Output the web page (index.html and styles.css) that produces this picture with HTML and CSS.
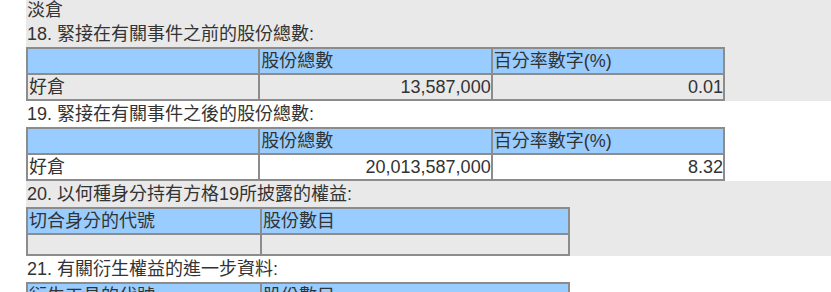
FILE: index.html
```html
<!DOCTYPE html>
<html lang="zh-Hant">
<head>
<meta charset="utf-8">
<title>權益披露</title>
<link rel="stylesheet" href="styles.css">
</head>
<body>
<div class="page">
  <div class="section alt">
    <div class="line first">淡倉</div>
    <div class="line">18. 緊接在有關事件之前的股份總數:</div>
    <table class="grid wide">
      <tr class="head"><td></td><td>股份總數</td><td>百分率數字(%)</td></tr>
      <tr><td>好倉</td><td class="num">13,587,000</td><td class="num">0.01</td></tr>
    </table>
  </div>
  <div class="section">
    <div class="line">19. 緊接在有關事件之後的股份總數:</div>
    <table class="grid wide">
      <tr class="head"><td></td><td>股份總數</td><td>百分率數字(%)</td></tr>
      <tr><td>好倉</td><td class="num">20,013,587,000</td><td class="num">8.32</td></tr>
    </table>
  </div>
  <div class="section alt">
    <div class="line">20. 以何種身分持有方格19所披露的權益:</div>
    <table class="grid narrow">
      <tr class="head"><td>切合身分的代號</td><td>股份數目</td></tr>
      <tr><td><div class="empty"></div></td><td><div class="empty"></div></td></tr>
    </table>
  </div>
  <div class="section">
    <div class="line">21. 有關衍生權益的進一步資料:</div>
    <table class="grid narrow">
      <tr class="head"><td>衍生工具的代號</td><td>股份數目</td></tr>
      <tr><td><div class="empty"></div></td><td><div class="empty"></div></td></tr>
    </table>
  </div>
</div>
</body>
</html>
```

FILE: styles.css
```css
html, body {
  margin: 0;
  padding: 0;
  background: #ffffff;
}

.page {
  margin-left: 26px;
  font-family: "Liberation Sans", "Noto Sans CJK TC", sans-serif;
  font-size: 18px;
  color: #333333;
}

.section {
  background: #ffffff;
}

.section.alt {
  background: #e9e9e9;
}

.line {
  height: 26px;
  line-height: 26px;
  padding-left: 1px;
  white-space: nowrap;
}

.line.first {
  height: 21px;
  line-height: 21px;
}

.grid {
  border-collapse: separate;
  border-spacing: 0;
  border: 1px solid #8c8c8c;
  table-layout: fixed;
}

.grid.wide {
  width: 699px;
}

.grid.narrow {
  width: 544px;
}

.grid.narrow td:first-child {
  width: 230px;
}

.grid td {
  border: 1px solid #8c8c8c;
  padding: 1px;
  line-height: 22px;
  white-space: nowrap;
  vertical-align: middle;
}

.grid .head td {
  background: #99ccff;
}

.grid td.num {
  text-align: right;
  padding-right: 0;
}

.empty {
  height: 17px;
}
```
